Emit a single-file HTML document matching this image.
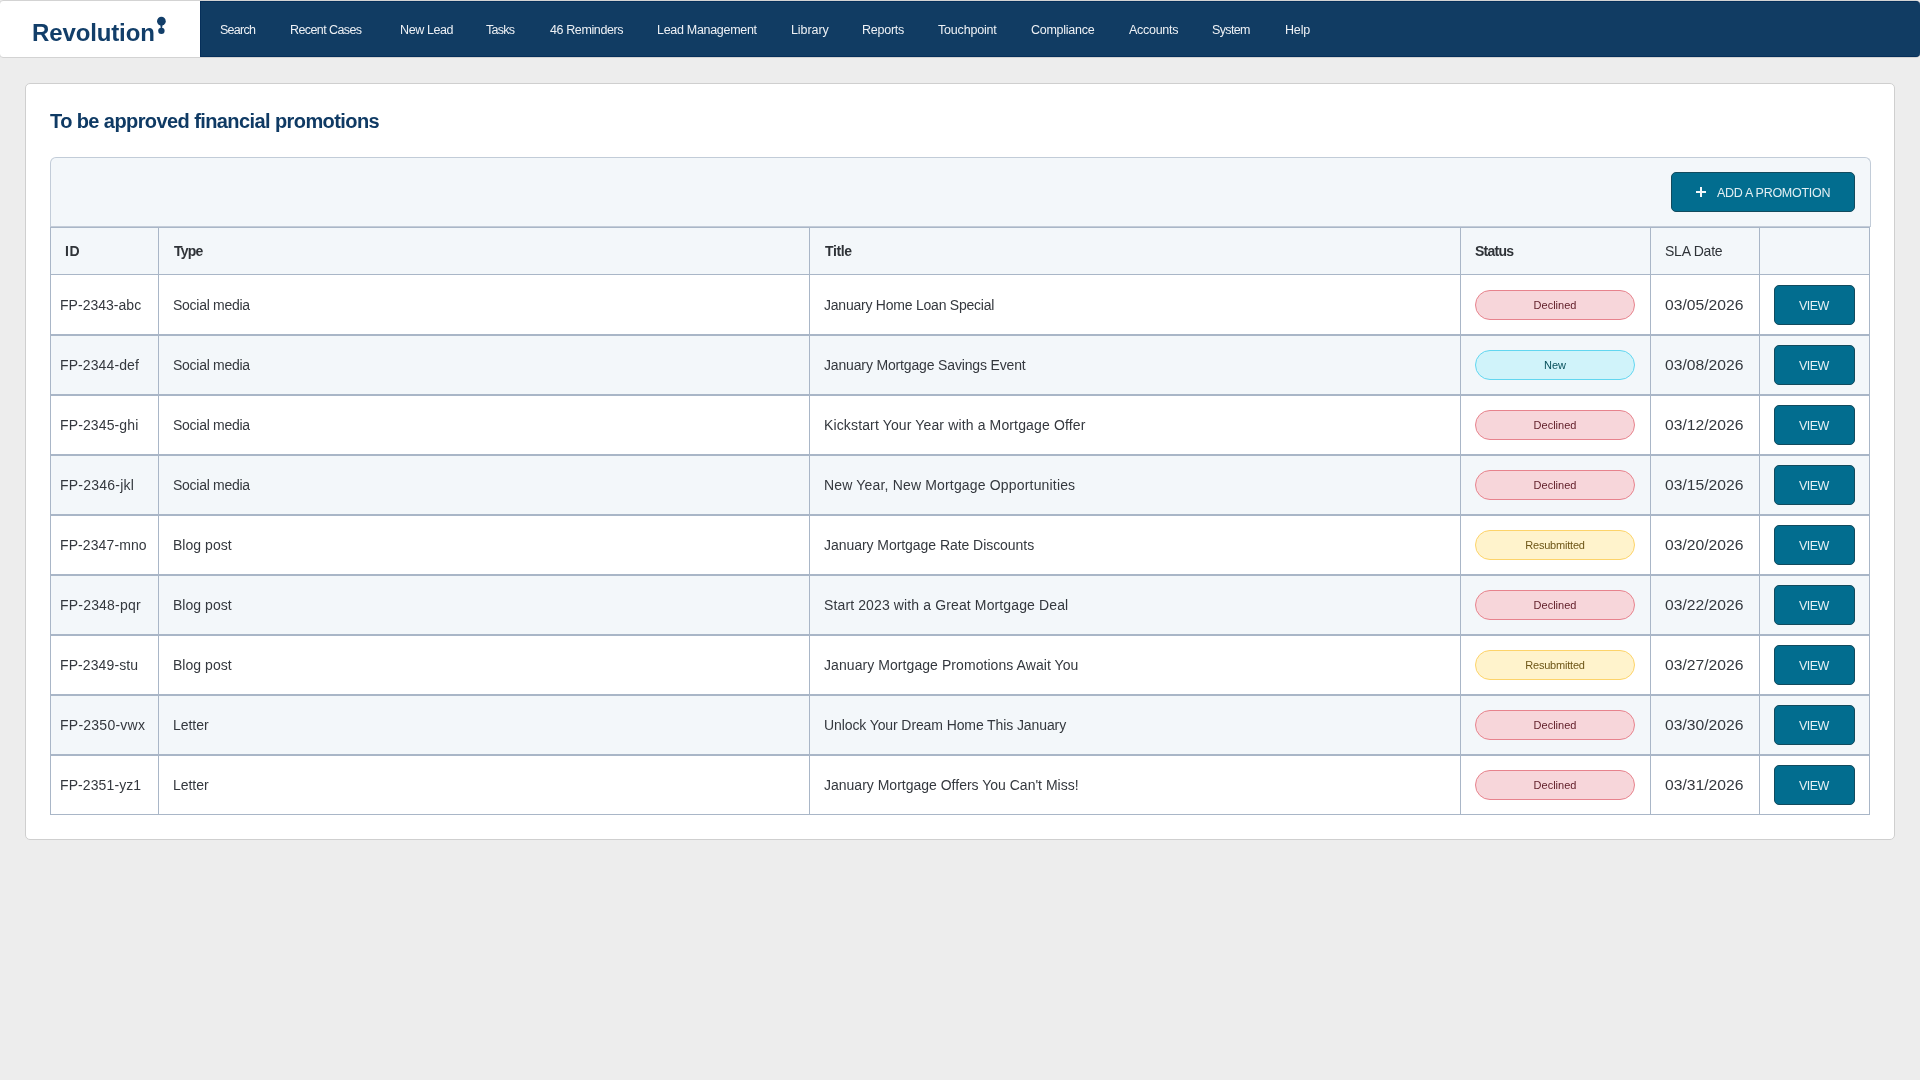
<!DOCTYPE html><html><head><meta charset="utf-8"><title>Financial promotions</title><style>
*{box-sizing:border-box;margin:0;padding:0}
html,body{width:1920px;height:1080px;overflow:hidden;background:#ededed;font-family:"Liberation Sans",sans-serif}
.a{position:absolute;white-space:nowrap;line-height:1;will-change:transform}
#hdr{position:absolute;left:-1px;top:0;width:1921px;height:58px;background:#fff;border:1px solid #d3d3d3;border-radius:4px}
#nav{position:absolute;left:200px;top:1px;width:1720px;height:56px;background:#113c63;border-top:1px solid #062f5a;border-left:1px solid #062f5a;border-bottom:1px solid #062f5a;border-radius:0 4px 4px 0}
#card{position:absolute;left:25px;top:83px;width:1870px;height:757px;background:#fff;border:1px solid #cfcfcf;border-radius:5px}
#tb{position:absolute;left:50px;top:157px;width:1821px;height:70px;background:#f3f7fa;border:1px solid #c2ccd8;border-bottom-color:#c3ccd8;border-radius:6px 6px 0 0}
#tbl{position:absolute;left:50px;top:227px;width:1820px;height:588px;background:#fff;border:1px solid #a9b6c7}
.hl{position:absolute;left:50px;width:1820px;background:#a9b6c7}
.vl{position:absolute;top:227px;height:588px;width:1px;background:#a9b6c7}
.rowbg{position:absolute;left:51px;width:1818px;background:#f3f7fa}
.badge{position:absolute;will-change:transform;left:1475px;width:160px;height:30px;border-radius:15px;border:1px solid;font-size:11px;text-align:center;line-height:28px;white-space:nowrap}
.b-Declined{background:#f7d6da;border-color:#e7838d;color:#5f1c26}
.b-New{background:#d0f3fa;border-color:#62d6f0;color:#08505c}
.b-Resubmitted{background:#fff3cc;border-color:#fdd36a;color:#6e5617}
.btn{position:absolute;will-change:transform;background:#026d8f;border:1px solid #124b5e;border-radius:5px;color:#e6f1f5;text-align:center}
.view{left:1774px;width:81px;height:40px;font-size:12.5px;line-height:40px;letter-spacing:-0.6px;padding-right:1.4px}
</style></head><body>
<div id="hdr"></div>
<div class="a" id="logo" style="left:31.60px;top:20.88px;font-size:24px;font-weight:700;color:#123e69;letter-spacing:-0.128px">Revolution</div>
<svg class="a" style="left:154px;top:14px" width="16" height="22" viewBox="0 0 16 22"><circle cx="7.4" cy="7.2" r="4.35" fill="#123e69"/><circle cx="7.4" cy="16.85" r="3.2" fill="#123e69"/><path d="M6.3 10.8 L8.5 10.8 L8.1 14.3 L6.7 14.3 Z" fill="#123e69"/></svg>
<div id="nav"></div>
<div class="a" id="nav0" style="left:220.00px;top:24.38px;font-size:12.5px;font-weight:400;color:#eef1f5;letter-spacing:-0.750px">Search</div>
<div class="a" id="nav1" style="left:289.80px;top:24.38px;font-size:12.5px;font-weight:400;color:#eef1f5;letter-spacing:-0.582px">Recent Cases</div>
<div class="a" id="nav2" style="left:399.50px;top:24.38px;font-size:12.5px;font-weight:400;color:#eef1f5;letter-spacing:-0.393px">New Lead</div>
<div class="a" id="nav3" style="left:486.00px;top:24.38px;font-size:12.5px;font-weight:400;color:#eef1f5;letter-spacing:-0.750px">Tasks</div>
<div class="a" id="nav4" style="left:549.50px;top:24.38px;font-size:12.5px;font-weight:400;color:#eef1f5;letter-spacing:-0.386px">46 Reminders</div>
<div class="a" id="nav5" style="left:656.60px;top:24.38px;font-size:12.5px;font-weight:400;color:#eef1f5;letter-spacing:-0.300px">Lead Management</div>
<div class="a" id="nav6" style="left:790.60px;top:24.38px;font-size:12.5px;font-weight:400;color:#eef1f5;letter-spacing:-0.083px">Library</div>
<div class="a" id="nav7" style="left:862.00px;top:24.38px;font-size:12.5px;font-weight:400;color:#eef1f5;letter-spacing:-0.250px">Reports</div>
<div class="a" id="nav8" style="left:938.40px;top:24.38px;font-size:12.5px;font-weight:400;color:#eef1f5;letter-spacing:-0.189px">Touchpoint</div>
<div class="a" id="nav9" style="left:1031.40px;top:24.38px;font-size:12.5px;font-weight:400;color:#eef1f5;letter-spacing:-0.267px">Compliance</div>
<div class="a" id="nav10" style="left:1129.20px;top:24.38px;font-size:12.5px;font-weight:400;color:#eef1f5;letter-spacing:-0.286px">Accounts</div>
<div class="a" id="nav11" style="left:1212.40px;top:24.38px;font-size:12.5px;font-weight:400;color:#eef1f5;letter-spacing:-0.640px">System</div>
<div class="a" id="nav12" style="left:1284.60px;top:24.38px;font-size:12.5px;font-weight:400;color:#eef1f5;letter-spacing:-0.167px">Help</div>
<div id="card"></div>
<div class="a" id="title" style="left:50.00px;top:111.40px;font-size:20px;font-weight:700;color:#0f3a64;letter-spacing:-0.588px">To be approved financial promotions</div>
<div id="tb"></div>
<div class="btn" style="left:1671px;top:172px;width:184px;height:40px"></div>
<svg class="a" style="left:1696px;top:187px" width="10" height="10"><rect x="4" y="0" width="2" height="10" fill="#f2f7f9"/><rect x="0" y="4" width="10" height="2" fill="#f2f7f9"/></svg>
<div class="a" id="addp" style="left:1716.60px;top:187.38px;font-size:12.5px;font-weight:400;color:#e3eff3;letter-spacing:-0.279px">ADD A PROMOTION</div>
<div id="tbl"></div>
<div class="rowbg" style="top:228px;height:46px"></div>
<div class="hl" style="top:274px;height:1px"></div>
<div class="rowbg" style="top:336px;height:58px"></div>
<div class="rowbg" style="top:456px;height:58px"></div>
<div class="rowbg" style="top:576px;height:58px"></div>
<div class="rowbg" style="top:696px;height:58px"></div>
<div class="hl" style="top:334px;height:2px"></div>
<div class="hl" style="top:394px;height:2px"></div>
<div class="hl" style="top:454px;height:2px"></div>
<div class="hl" style="top:514px;height:2px"></div>
<div class="hl" style="top:574px;height:2px"></div>
<div class="hl" style="top:634px;height:2px"></div>
<div class="hl" style="top:694px;height:2px"></div>
<div class="hl" style="top:754px;height:2px"></div>
<div class="vl" style="left:158px"></div>
<div class="vl" style="left:809px"></div>
<div class="vl" style="left:1460px"></div>
<div class="vl" style="left:1650px"></div>
<div class="vl" style="left:1759px"></div>
<div class="a" id="h0" style="left:65.00px;top:244.18px;font-size:14px;font-weight:700;color:#2f3338;letter-spacing:0.500px">ID</div>
<div class="a" id="h1" style="left:173.50px;top:244.18px;font-size:14px;font-weight:700;color:#2f3338;letter-spacing:-0.750px">Type</div>
<div class="a" id="h2" style="left:825.00px;top:244.18px;font-size:14px;font-weight:700;color:#2f3338;letter-spacing:-0.375px">Title</div>
<div class="a" id="h3" style="left:1475.00px;top:244.18px;font-size:14px;font-weight:700;color:#2f3338;letter-spacing:-0.750px">Status</div>
<div class="a" id="h4" style="left:1665.00px;top:244.18px;font-size:14px;font-weight:400;color:#2f3338;letter-spacing:-0.214px">SLA Date</div>
<div class="a" id="id0" style="left:60.00px;top:298.18px;font-size:14px;font-weight:400;color:#34383e;letter-spacing:0.025px">FP-2343-abc</div>
<div class="a" id="ty0" style="left:172.50px;top:298.18px;font-size:14px;font-weight:400;color:#34383e;letter-spacing:-0.273px">Social media</div>
<div class="a" id="ti0" style="left:824.00px;top:298.18px;font-size:14px;font-weight:400;color:#34383e;letter-spacing:-0.229px">January Home Loan Special</div>
<div class="a" id="dt0" style="left:1665.00px;top:298.18px;font-size:14px;font-weight:400;color:#34383e;letter-spacing:0.000px;transform:scaleX(1.12);transform-origin:0 0">03/05/2026</div>
<div class="badge b-Declined" style="top:290px">Declined</div>
<div class="btn view" style="top:285px">VIEW</div>
<div class="a" id="id1" style="left:60.00px;top:358.18px;font-size:14px;font-weight:400;color:#34383e;letter-spacing:0.100px">FP-2344-def</div>
<div class="a" id="ty1" style="left:172.50px;top:358.18px;font-size:14px;font-weight:400;color:#34383e;letter-spacing:-0.273px">Social media</div>
<div class="a" id="ti1" style="left:824.00px;top:358.18px;font-size:14px;font-weight:400;color:#34383e;letter-spacing:-0.155px">January Mortgage Savings Event</div>
<div class="a" id="dt1" style="left:1665.00px;top:358.18px;font-size:14px;font-weight:400;color:#34383e;letter-spacing:0.000px;transform:scaleX(1.12);transform-origin:0 0">03/08/2026</div>
<div class="badge b-New" style="top:350px">New</div>
<div class="btn view" style="top:345px">VIEW</div>
<div class="a" id="id2" style="left:60.00px;top:418.18px;font-size:14px;font-weight:400;color:#34383e;letter-spacing:0.125px">FP-2345-ghi</div>
<div class="a" id="ty2" style="left:172.50px;top:418.18px;font-size:14px;font-weight:400;color:#34383e;letter-spacing:-0.273px">Social media</div>
<div class="a" id="ti2" style="left:824.00px;top:418.18px;font-size:14px;font-weight:400;color:#34383e;letter-spacing:0.138px">Kickstart Your Year with a Mortgage Offer</div>
<div class="a" id="dt2" style="left:1665.00px;top:418.18px;font-size:14px;font-weight:400;color:#34383e;letter-spacing:0.000px;transform:scaleX(1.12);transform-origin:0 0">03/12/2026</div>
<div class="badge b-Declined" style="top:410px">Declined</div>
<div class="btn view" style="top:405px">VIEW</div>
<div class="a" id="id3" style="left:60.00px;top:478.18px;font-size:14px;font-weight:400;color:#34383e;letter-spacing:0.225px">FP-2346-jkl</div>
<div class="a" id="ty3" style="left:172.50px;top:478.18px;font-size:14px;font-weight:400;color:#34383e;letter-spacing:-0.273px">Social media</div>
<div class="a" id="ti3" style="left:824.00px;top:478.18px;font-size:14px;font-weight:400;color:#34383e;letter-spacing:0.171px">New Year, New Mortgage Opportunities</div>
<div class="a" id="dt3" style="left:1665.00px;top:478.18px;font-size:14px;font-weight:400;color:#34383e;letter-spacing:0.000px;transform:scaleX(1.12);transform-origin:0 0">03/15/2026</div>
<div class="badge b-Declined" style="top:470px">Declined</div>
<div class="btn view" style="top:465px">VIEW</div>
<div class="a" id="id4" style="left:60.00px;top:538.18px;font-size:14px;font-weight:400;color:#34383e;letter-spacing:0.100px">FP-2347-mno</div>
<div class="a" id="ty4" style="left:172.50px;top:538.18px;font-size:14px;font-weight:400;color:#34383e;letter-spacing:0.031px">Blog post</div>
<div class="a" id="ti4" style="left:824.00px;top:538.18px;font-size:14px;font-weight:400;color:#34383e;letter-spacing:-0.050px">January Mortgage Rate Discounts</div>
<div class="a" id="dt4" style="left:1665.00px;top:538.18px;font-size:14px;font-weight:400;color:#34383e;letter-spacing:0.000px;transform:scaleX(1.12);transform-origin:0 0">03/20/2026</div>
<div class="badge b-Resubmitted" style="top:530px;letter-spacing:-0.2px">Resubmitted</div>
<div class="btn view" style="top:525px">VIEW</div>
<div class="a" id="id5" style="left:60.00px;top:598.18px;font-size:14px;font-weight:400;color:#34383e;letter-spacing:0.200px">FP-2348-pqr</div>
<div class="a" id="ty5" style="left:172.50px;top:598.18px;font-size:14px;font-weight:400;color:#34383e;letter-spacing:0.031px">Blog post</div>
<div class="a" id="ti5" style="left:824.00px;top:598.18px;font-size:14px;font-weight:400;color:#34383e;letter-spacing:0.125px">Start 2023 with a Great Mortgage Deal</div>
<div class="a" id="dt5" style="left:1665.00px;top:598.18px;font-size:14px;font-weight:400;color:#34383e;letter-spacing:0.000px;transform:scaleX(1.12);transform-origin:0 0">03/22/2026</div>
<div class="badge b-Declined" style="top:590px">Declined</div>
<div class="btn view" style="top:585px">VIEW</div>
<div class="a" id="id6" style="left:60.00px;top:658.18px;font-size:14px;font-weight:400;color:#34383e;letter-spacing:0.100px">FP-2349-stu</div>
<div class="a" id="ty6" style="left:172.50px;top:658.18px;font-size:14px;font-weight:400;color:#34383e;letter-spacing:0.031px">Blog post</div>
<div class="a" id="ti6" style="left:824.00px;top:658.18px;font-size:14px;font-weight:400;color:#34383e;letter-spacing:0.069px">January Mortgage Promotions Await You</div>
<div class="a" id="dt6" style="left:1665.00px;top:658.18px;font-size:14px;font-weight:400;color:#34383e;letter-spacing:0.000px;transform:scaleX(1.12);transform-origin:0 0">03/27/2026</div>
<div class="badge b-Resubmitted" style="top:650px;letter-spacing:-0.2px">Resubmitted</div>
<div class="btn view" style="top:645px">VIEW</div>
<div class="a" id="id7" style="left:60.00px;top:718.18px;font-size:14px;font-weight:400;color:#34383e;letter-spacing:0.250px">FP-2350-vwx</div>
<div class="a" id="ty7" style="left:172.50px;top:718.18px;font-size:14px;font-weight:400;color:#34383e;letter-spacing:-0.050px">Letter</div>
<div class="a" id="ti7" style="left:824.00px;top:718.18px;font-size:14px;font-weight:400;color:#34383e;letter-spacing:-0.103px">Unlock Your Dream Home This January</div>
<div class="a" id="dt7" style="left:1665.00px;top:718.18px;font-size:14px;font-weight:400;color:#34383e;letter-spacing:0.000px;transform:scaleX(1.12);transform-origin:0 0">03/30/2026</div>
<div class="badge b-Declined" style="top:710px">Declined</div>
<div class="btn view" style="top:705px">VIEW</div>
<div class="a" id="id8" style="left:60.00px;top:778.18px;font-size:14px;font-weight:400;color:#34383e;letter-spacing:0.100px">FP-2351-yz1</div>
<div class="a" id="ty8" style="left:172.50px;top:778.18px;font-size:14px;font-weight:400;color:#34383e;letter-spacing:-0.050px">Letter</div>
<div class="a" id="ti8" style="left:824.00px;top:778.18px;font-size:14px;font-weight:400;color:#34383e;letter-spacing:0.000px">January Mortgage Offers You Can't Miss!</div>
<div class="a" id="dt8" style="left:1665.00px;top:778.18px;font-size:14px;font-weight:400;color:#34383e;letter-spacing:0.000px;transform:scaleX(1.12);transform-origin:0 0">03/31/2026</div>
<div class="badge b-Declined" style="top:770px">Declined</div>
<div class="btn view" style="top:765px">VIEW</div>
</body></html>
